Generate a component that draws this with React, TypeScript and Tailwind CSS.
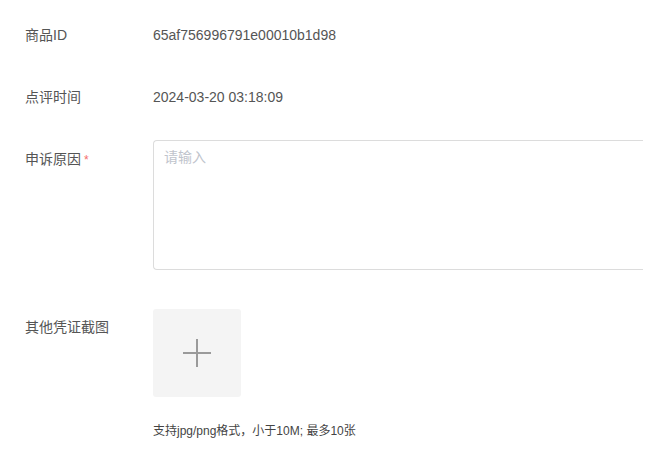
export default function App() {
  const font = { fontFamily: '"Liberation Sans", "Noto Sans CJK SC", sans-serif' };

  return (
    <div className="w-[651px] h-[462px] bg-white overflow-hidden text-[14px] text-[#555]" style={font}>
      <div className="flex pt-[26px] h-[18px] leading-[18px] box-content">
        <div className="w-[128px] pl-[25px] box-content">商品ID</div>
        <div>65af756996791e00010b1d98</div>
      </div>
      <div className="flex mt-[44px] leading-[18px]">
        <div className="w-[128px] pl-[25px] box-content">点评时间</div>
        <div>2024-03-20 03:18:09</div>
      </div>
      <div className="flex mt-[34px]">
        <div className="w-[128px] pl-[25px] box-content pt-[10px] leading-[18px]">
          申诉原因<span className="text-[#f56c6c] ml-[3px] text-[12px]">*</span>
        </div>
        <textarea
          placeholder="请输入"
          className="w-[490px] h-[130px] border border-r-0 border-[#dcdcdc] rounded-l-[4px] px-[10px] py-[7px] resize-none outline-none text-[14px] leading-[18px] placeholder:text-[#c0c4cc]"
        />
      </div>
      <div className="flex mt-[39px]">
        <div className="w-[128px] pl-[25px] box-content pt-[9px] leading-[18px]">其他凭证截图</div>
        <div className="flex flex-col">
          <div className="w-[88px] h-[88px] bg-[#f4f4f4] rounded-[3px] flex items-center justify-center">
            <svg width="30" height="30" viewBox="0 0 30 30">
              <path d="M15 1v28M1 15h28" stroke="#9a9a9a" strokeWidth="2" />
            </svg>
          </div>
          <div className="mt-[26px] text-[12px] leading-[16px] text-[#444]">支持jpg/png格式，小于10M; 最多10张</div>
        </div>
      </div>
    </div>
  );
}
